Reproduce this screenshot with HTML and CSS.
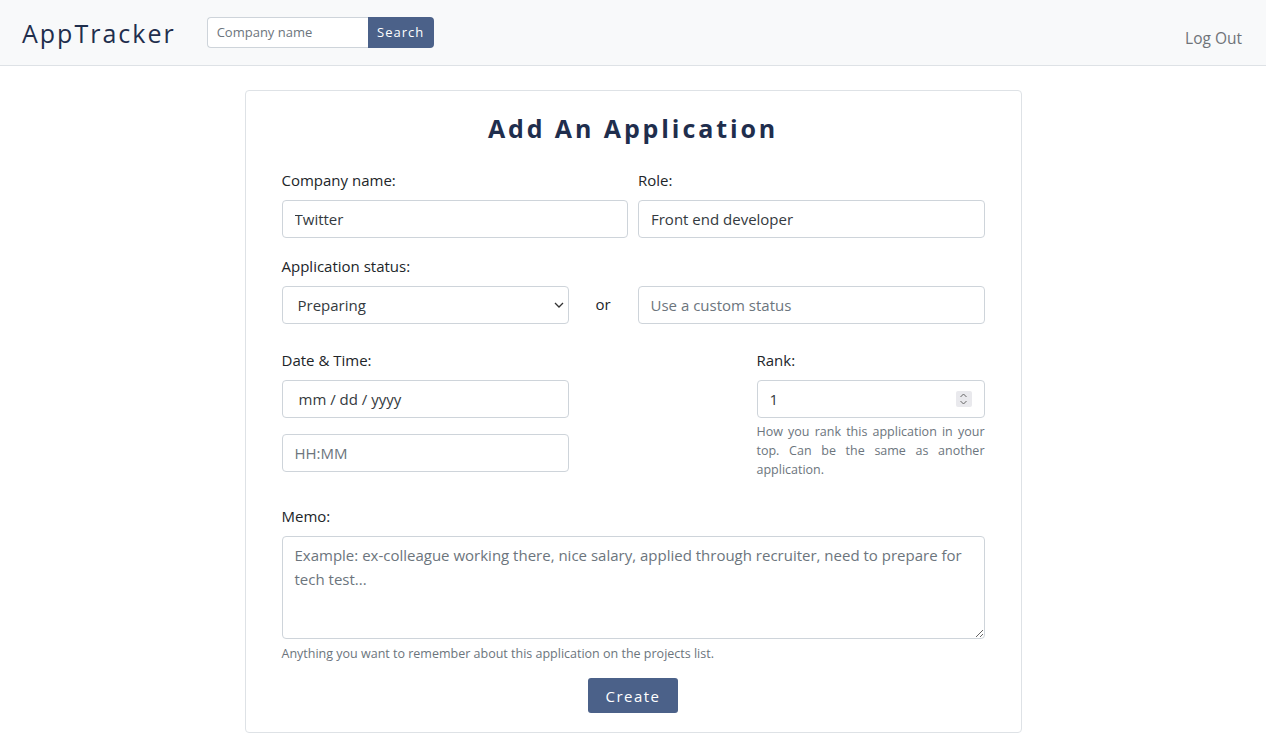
FILE: index.html
```html
<!DOCTYPE html>
<html lang="en">
<head>
<meta charset="utf-8">
<title>AppTracker</title>
<link rel="stylesheet" href="styles.css">
</head>
<body>
<nav class="navbar">
  <div class="nav-left">
    <a class="brand" href="#">AppTracker</a>
    <form class="search">
      <input class="search-input" type="text" placeholder="Company name">
      <button class="search-btn" type="button">Search</button>
    </form>
  </div>
  <a class="logout" href="#">Log Out</a>
</nav>

<main class="card">
  <h1 class="title">Add An Application</h1>

  <div class="row-two">
    <div class="field">
      <label class="label">Company name:</label>
      <input class="control" type="text" value="Twitter">
    </div>
    <div class="field">
      <label class="label">Role:</label>
      <input class="control" type="text" value="Front end developer">
    </div>
  </div>

  <div class="field status-field">
    <label class="label">Application status:</label>
    <div class="row-status">
      <div class="select-wrap">
        <select class="control select">
          <option>Preparing</option>
        </select>
        <svg class="chev" width="10" height="6" viewBox="0 0 10 6"><path d="M1 1l4 4 4-4" fill="none" stroke="#333" stroke-width="1.3"/></svg>
      </div>
      <span class="or">or</span>
      <input class="control" type="text" placeholder="Use a custom status">
    </div>
  </div>

  <div class="row-date">
    <div class="field">
      <label class="label">Date &amp; Time:</label>
      <div class="control fake date">mm / dd / yyyy</div>
      <input class="control time" type="text" placeholder="HH:MM">
    </div>
    <div class="field">
      <label class="label">Rank:</label>
      <div class="num-wrap">
        <input class="control" type="text" value="1">
        <span class="spin">
          <svg width="9" height="14" viewBox="0 0 9 14"><path d="M1.5 5l3-3 3 3M1.5 9l3 3 3-3" fill="none" stroke="#666" stroke-width="1"/></svg>
        </span>
      </div>
      <p class="help justify">How you rank this application in your top. Can be the same as another application.</p>
    </div>
  </div>

  <div class="field memo">
    <label class="label">Memo:</label>
    <textarea class="control area" placeholder="Example: ex-colleague working there, nice salary, applied through recruiter, need to prepare for tech test..."></textarea>
    <p class="help">Anything you want to remember about this application on the projects list.</p>
  </div>

  <div class="actions">
    <button class="create" type="button">Create</button>
  </div>
</main>
</body>
</html>
```

FILE: styles.css
```css
* { box-sizing: border-box; }
html, body { margin: 0; padding: 0; }
body {
  font-family: "Open Sans", "Noto Sans", "Liberation Sans", sans-serif;
  font-size: 15px;
  color: #212529;
  background: #fff;
}

.navbar {
  height: 66px;
  background: #f8f9fa;
  border-bottom: 1px solid #dee2e6;
  display: flex;
  align-items: center;
  justify-content: space-between;
  padding: 0 24px 0 22px;
}
.nav-left { display: flex; align-items: center; }
.brand {
  font-size: 25px;
  letter-spacing: 2px;
  color: #1f2e4d;
  text-decoration: none;
  margin-right: 31px;
  margin-top: 1px;
}
.search { display: flex; margin-top: -1px; }
.search-input {
  width: 161px;
  height: 31px;
  border: 1px solid #ced4da;
  border-right: none;
  border-radius: 4px 0 0 4px;
  padding: 0 9px;
  font-family: inherit;
  font-size: 13px;
  color: #495057;
  background: #fff;
}
.search-input::placeholder { color: #6c757d; }
.search-btn {
  width: 66px;
  height: 31px;
  border: none;
  border-radius: 0 4px 4px 0;
  background: #4b6189;
  color: #fff;
  font-family: inherit;
  font-size: 13px;
  letter-spacing: 1px;
  padding: 0;
}
.logout {
  color: #6f7378;
  text-decoration: none;
  font-size: 15.5px;
  margin-top: 10px;
}

.card {
  width: 777px;
  margin: 24px auto 0;
  border: 1px solid #dee2e6;
  border-radius: 4px;
  padding: 22px 36px 19px;
}
.title {
  margin: 0 0 24px;
  text-align: center;
  font-size: 25px;
  line-height: 31px;
  font-weight: 700;
  letter-spacing: 2.9px;
  color: #1f2e4d;
}

.field { display: flex; flex-direction: column; }
.label {
  font-size: 15px;
  line-height: 24px;
  margin-bottom: 8px;
  color: #212529;
}
.control {
  height: 38px;
  width: 100%;
  border: 1px solid #ced4da;
  border-radius: 4px;
  padding: 0 12px;
  font-family: inherit;
  font-size: 15px;
  color: #343a40;
  background: #fff;
  outline: none;
}
.control::placeholder { color: #6c757d; opacity: 1; }

.row-two {
  display: grid;
  grid-template-columns: 1fr 1fr;
  column-gap: 10px;
}

.status-field { margin-top: 16px; }
.row-status {
  display: grid;
  grid-template-columns: 287px 69px 1fr;
  align-items: center;
}
.select-wrap { position: relative; }
.select {
  appearance: none;
  -webkit-appearance: none;
  padding-left: 15px;
}
.chev { position: absolute; right: 5px; top: 16px; }
.or { text-align: center; font-size: 15px; margin-top: -2px; }

.row-date {
  display: grid;
  grid-template-columns: 287px 228px;
  justify-content: space-between;
  margin-top: 24px;
}
.fake { display: flex; align-items: center; padding-left: 16px; }
.time { margin-top: 16px; }
.num-wrap { position: relative; }
.spin {
  position: absolute;
  right: 13px;
  top: 11px;
  width: 16px;
  height: 16px;
  background: #e9e9ed;
  border-radius: 2px;
  display: flex;
  align-items: center;
  justify-content: center;
}
.help {
  margin: 4px 0 0;
  font-size: 12.5px;
  line-height: 19px;
  color: #6c757d;
}
.justify { text-align: justify; }

.memo { margin-top: 25px; }
.area {
  height: 103px;
  padding: 6px 12px;
  line-height: 24px;
  resize: vertical;
  display: block;
}
.memo .help { margin-top: 5px; }

.actions { display: flex; justify-content: center; margin-top: 15px; }
.create {
  width: 90px;
  height: 35px;
  border: none;
  border-radius: 3px;
  background: #4b6189;
  color: #fff;
  font-family: inherit;
  font-size: 15px;
  letter-spacing: 1.5px;
  padding: 0;
}
```
